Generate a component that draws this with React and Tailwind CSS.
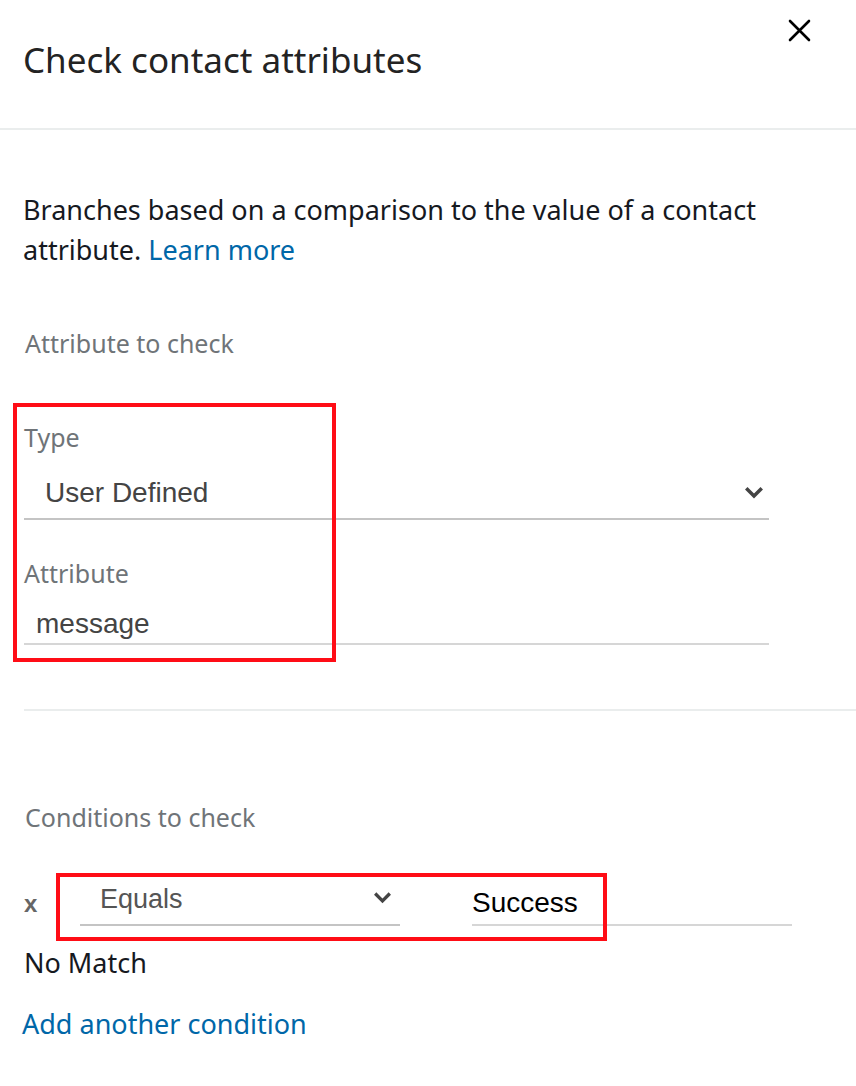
const ember = { fontFamily: '"Noto Sans", "Open Sans", sans-serif' };
const helv = { fontFamily: '"Liberation Sans", Arial, sans-serif' };

function Chevron({ className }) {
    return (
        <svg className={className} viewBox="0 0 18 12" fill="none" stroke="currentColor" strokeWidth="3.5" strokeLinecap="square">
            <path d="M2.5 2.5 L9 9 L15.5 2.5" />
        </svg>
    );
}

export default function App() {
    return (
        <div className="relative w-[856px] min-h-[1086px] bg-white text-[#16191f]" style={ember}>
            {/* header */}
            <div className="relative h-[128px] pl-[23px]">
                <h1 className="pt-[38px] text-[35px] leading-[44px] text-[#232323]">Check contact attributes</h1>
                <button className="absolute right-[45px] top-[19px] w-[23px] h-[23px] text-black">
                    <svg viewBox="0 0 23 23" className="w-full h-full" fill="none" stroke="currentColor" strokeWidth="2.6" strokeLinecap="round">
                        <path d="M2 2 L21 21 M21 2 L2 21" />
                    </svg>
                </button>
            </div>
            <div className="h-[2px] bg-[#eaeded]" />

            <div className="pl-[23px]">
                <p className="mt-[60px] text-[27px] leading-[40px] pr-[50px]">
                    Branches based on a comparison to the value of a contact attribute.{' '}
                    <a className="text-[#0067a8]">Learn more</a>
                </p>

                <div className="mt-[57px] text-[25px] leading-[32px] text-[#6f7478] pl-[2px]">Attribute to check</div>

                {/* attribute fields */}
                <div className="w-[746px] pl-[1px]">
                    <div className="mt-[62px] text-[25px] leading-[32px] text-[#6f7478]">Type</div>
                    <div className="mt-[15px] h-[52px] flex items-center justify-between border-b-2 border-[#c4c4c4] pl-[21px] pr-[6px]">
                        <span className="text-[28px] text-[#444]" style={helv}>User Defined</span>
                        <Chevron className="w-[18px] h-[12px] text-[#444]" />
                    </div>

                    <div className="mt-[37px] text-[25px] leading-[32px] text-[#6f7478]">Attribute</div>
                    <div className="mt-[16px] h-[40px] flex items-center border-b-2 border-[#d6d6d6] pl-[12px]">
                        <span className="text-[28px] text-[#444]" style={helv}>message</span>
                    </div>
                </div>
            </div>

            <div className="ml-[24px] mt-[64px] h-[2px] bg-[#eaeded]" />

            <div className="pl-[24px]">
                <div className="mt-[90px] text-[25px] leading-[32px] text-[#6f7478] pl-[1px]">Conditions to check</div>

                <div className="mt-[45px] h-[48px] flex items-center">
                    <span className="w-[56px] text-[24px] font-bold text-[#666] pt-[4px]" style={helv}>x</span>
                    <div className="w-[320px] h-full flex items-center justify-between border-b-2 border-[#c4c4c4] pl-[20px] pr-[9px]">
                        <span className="text-[27px] text-[#555] -mt-[4px]" style={helv}>Equals</span>
                        <Chevron className="w-[17px] h-[12px] text-[#444] -mt-[6px]" />
                    </div>
                    <div className="ml-[72px] w-[320px] h-full flex items-center border-b-2 border-[#d6d6d6]">
                        <span className="text-[28px] text-black pt-[4px]" style={helv}>Success</span>
                    </div>
                </div>

                <div className="mt-[21px] text-[27px] leading-[32px]">No Match</div>
                <div className="mt-[29px] text-[27px] leading-[32px] text-[#0067a8] -ml-[2px]">Add another condition</div>
            </div>

            {/* annotation boxes */}
            <div className="absolute left-[13px] top-[403px] w-[323px] h-[259px] border-[4px] border-[#ff0d16] pointer-events-none" />
            <div className="absolute left-[56px] top-[873px] w-[551px] h-[68px] border-[4px] border-[#ff0d16] pointer-events-none" />
        </div>
    );
}
